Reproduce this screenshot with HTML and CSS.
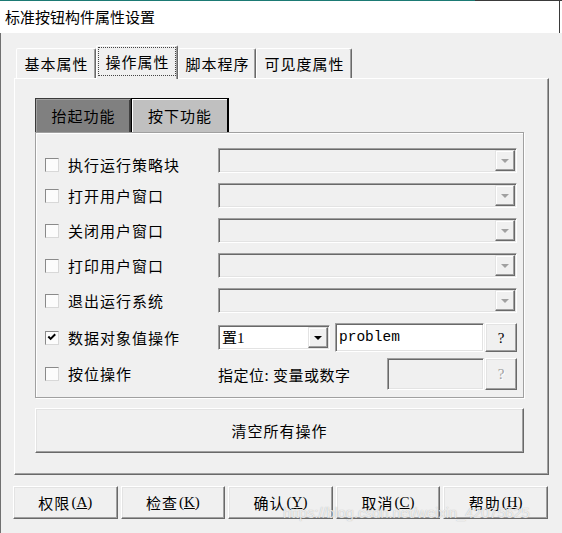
FILE: index.html
```html
<!DOCTYPE html>
<html lang="zh">
<head>
<meta charset="utf-8">
<title>标准按钮构件属性设置</title>
<link rel="stylesheet" href="styles.css">
</head>
<body>
<div class="titlebar">标准按钮构件属性设置</div>
<div class="client">
  <div class="tabs">
    <div class="tab t1">基本属性</div>
    <div class="tab t2 active"><span class="focus">操作属性</span></div>
    <div class="tab t3">脚本程序</div>
    <div class="tab t4">可见度属性</div>
  </div>
  <div class="panel">
    <div class="subtabs">
      <div class="subtab up">抬起功能</div>
      <div class="subtab down">按下功能</div>
    </div>
    <div class="group">
      <div class="row">
        <div class="lead first"><span class="check"></span><span class="label">执行运行策略块</span></div>
        <div class="combo"><span class="dd"><span class="arrow"></span></span></div>
      </div>
      <div class="row">
        <div class="lead"><span class="check"></span><span class="label">打开用户窗口</span></div>
        <div class="combo"><span class="dd"><span class="arrow"></span></span></div>
      </div>
      <div class="row">
        <div class="lead"><span class="check"></span><span class="label">关闭用户窗口</span></div>
        <div class="combo"><span class="dd"><span class="arrow"></span></span></div>
      </div>
      <div class="row">
        <div class="lead"><span class="check"></span><span class="label">打印用户窗口</span></div>
        <div class="combo"><span class="dd"><span class="arrow"></span></span></div>
      </div>
      <div class="row">
        <div class="lead"><span class="check"></span><span class="label">退出运行系统</span></div>
        <div class="combo"><span class="dd"><span class="arrow"></span></span></div>
      </div>
      <div class="row r6">
        <div class="lead"><span class="check"><svg width="13" height="13" viewBox="0 0 13 13"><polyline points="2.5,5.5 5,8 10,3" fill="none" stroke="#000" stroke-width="2.2"/></svg></span><span class="label">数据对象值操作</span></div>
        <div class="combo small"><span class="val">置<span class="num">1</span></span><span class="dd"><span class="arrow dark"></span></span></div>
        <div class="edit"><span class="mono">problem</span></div>
        <div class="qbtn">?</div>
      </div>
      <div class="row r7">
        <div class="lead"><span class="check"></span><span class="label">按位操作</span></div>
        <div class="hint">指定位: 变量或数字</div>
        <div class="edit disabled"></div>
        <div class="qbtn disabled">?</div>
      </div>
    </div>
    <div class="btn clear">清空所有操作</div>
  </div>
  <div class="buttons">
    <div class="btn bb">权限<span class="lat">(<u>A</u>)</span></div>
    <div class="btn bb">检查<span class="lat">(<u>K</u>)</span></div>
    <div class="btn bb">确认<span class="lat">(<u>Y</u>)</span></div>
    <div class="btn bb">取消<span class="lat">(<u>C</u>)</span></div>
    <div class="btn bb">帮助<span class="lat">(<u>H</u>)</span></div>
  </div>
</div>
<div class="watermark">https://blog.csdn.net/weixin_42075625</div>
</body>
</html>
```

FILE: styles.css
```css
html, body {
  margin: 0;
  padding: 0;
}
body {
  width: 562px;
  height: 533px;
  overflow: hidden;
  position: relative;
  background: #f0f0f0;
  font-family: "Noto Sans CJK SC", "Liberation Sans", sans-serif;
  font-size: 15px;
  color: #000;
}
.titlebar {
  height: 33px;
  line-height: 33px;
  padding-left: 5px;
  box-sizing: border-box;
  background:
    linear-gradient(to right, #1b7a74 0, #1b7a74 475px, #3a3a3a 475px) top left / 100% 1px no-repeat,
    linear-gradient(#3a3a3a, #3a3a3a) 559px 0 / 1px 100% no-repeat,
    #fff;
  font-size: 15px;
}
.client {
  height: 500px;
  box-shadow: inset 1px 0 #707070;
  padding-top: 12px;
  box-sizing: border-box;
}
.tabs {
  display: flex;
  align-items: flex-end;
  height: 33px;
  margin-left: 16px;
}
.tab {
  height: 30px;
  box-sizing: border-box;
  display: flex;
  align-items: center;
  justify-content: center;
  border: 1px solid;
  border-bottom: none;
  border-color: #fff #696969 transparent #fff;
  box-shadow: inset -1px 0 #a0a0a0;
  border-radius: 2px 2px 0 0;
  letter-spacing: 1px;
  padding: 0 0 1px 1px;
  background: #f0f0f0;
}
.t1 { width: 80px; }
.t2 { width: 82px; }
.t3 { width: 78px; }
.t4 { width: 96px; }
.tab.active {
  height: 34px;
  margin-bottom: -1px;
  position: relative;
  z-index: 1;
  align-items: flex-start;
  padding: 1px 0 0 0;
}
.focus {
  width: 78px;
  height: 29px;
  box-sizing: border-box;
  border: 1px dotted #444;
  display: flex;
  align-items: center;
  justify-content: center;
  padding: 0 0 1px 1px;
}
.panel {
  margin-left: 14px;
  width: 535px;
  height: 397px;
  box-sizing: border-box;
  border: 1px solid;
  border-color: #fff #696969 #696969 #fff;
  box-shadow: inset -1px -1px #a0a0a0;
  padding: 19px 0 0 20px;
}
.subtabs {
  display: flex;
  height: 34px;
}
.subtab {
  height: 34px;
  box-sizing: border-box;
  display: flex;
  align-items: center;
  justify-content: center;
  letter-spacing: 1px;
  padding-left: 1px;
}
.subtab.up {
  width: 96px;
  background: #808080;
  border: 1px solid #3a3a3a;
  border-bottom: none;
  box-shadow: inset 1px 1px #a0a0a0, inset -1px 0 #404040;
}
.subtab.down {
  width: 98px;
  background: #c0c0c0;
  border: 1px solid #000;
  border-right-width: 2px;
  border-bottom: none;
  box-shadow: inset 1px 1px #fff;
}
.group {
  width: 489px;
  height: 266px;
  box-sizing: border-box;
  border: 1px solid #a0a0a0;
  box-shadow: 1px 1px 0 #fff, inset 1px 1px 0 #fff;
  padding: 15px 0 0 9px;
  display: flex;
  flex-direction: column;
  gap: 10px;
}
.row {
  display: flex;
  align-items: center;
  height: 25px;
}
.row.r6 { height: 29px; }
.row.r7 { height: 32px; margin-top: -4px; }
.lead {
  display: flex;
  align-items: center;
  width: 173px;
}
.lead.first { margin-top: 9px; }
.check {
  width: 14px;
  height: 14px;
  box-sizing: border-box;
  border: 1px solid;
  border-color: #8a8a8a #d8d8d8 #d8d8d8 #8a8a8a;
  background: #fcfcfc;
  margin-right: 9px;
  display: flex;
  align-items: center;
  justify-content: center;
}
.check svg { display: block; }
.label {
  letter-spacing: 1px;
  line-height: 20px;
}
.combo {
  width: 299px;
  height: 25px;
  box-sizing: border-box;
  border: 1px solid;
  border-color: #a0a0a0 #fff #fff #a0a0a0;
  box-shadow: inset 1px 1px #696969, inset -1px -1px #e3e3e3;
  background: #f0f0f0;
  display: flex;
  align-items: center;
  justify-content: flex-end;
  padding-right: 1px;
}
.combo.small {
  width: 112px;
  background: #fff;
  justify-content: space-between;
  padding-left: 3px;
}
.val {
  font-size: 15px;
  line-height: 20px;
}
.num {
  font-family: "Liberation Serif", serif;
}
.dd {
  width: 20px;
  height: 21px;
  box-sizing: border-box;
  border: 1px solid;
  border-color: #e3e3e3 #696969 #696969 #e3e3e3;
  box-shadow: inset -1px -1px #a0a0a0, inset 1px 1px #fff;
  background: #f0f0f0;
  display: flex;
  align-items: center;
  justify-content: center;
}
.arrow {
  width: 0;
  height: 0;
  border-left: 4px solid transparent;
  border-right: 4px solid transparent;
  border-top: 4px solid #a0a0a0;
  margin-top: 1px;
}
.arrow.dark { border-top-color: #000; }
.edit {
  width: 149px;
  height: 29px;
  box-sizing: border-box;
  margin-left: 5px;
  border: 1px solid;
  border-color: #a0a0a0 #fff #fff #a0a0a0;
  box-shadow: inset 1px 1px #696969, inset -1px -1px #e3e3e3;
  background: #fff;
  display: flex;
  align-items: center;
  padding: 0 0 2px 3px;
}
.mono {
  font-family: "Liberation Mono", monospace;
  font-size: 14.5px;
}
.hint {
  width: 169px;
  letter-spacing: 0.5px;
}
.edit.disabled {
  width: 97px;
  height: 32px;
  margin-left: 0;
  background: #f0f0f0;
}
.qbtn {
  width: 32px;
  height: 29px;
  box-sizing: border-box;
  margin-left: 1px;
  border: 1px solid;
  border-color: #fff #696969 #696969 #fff;
  box-shadow: inset -1px -1px #a0a0a0, inset 1px 1px #e3e3e3;
  display: flex;
  align-items: center;
  justify-content: center;
  font-family: "Liberation Serif", serif;
  font-size: 15px;
  padding-top: 1px;
}
.qbtn.disabled {
  height: 32px;
  color: #a0a0a0;
  text-shadow: 1px 1px #fff;
}
.btn {
  box-sizing: border-box;
  border: 1px solid;
  border-color: #fff #696969 #696969 #fff;
  box-shadow: inset -1px -1px #a0a0a0, inset 1px 1px #e3e3e3;
  display: flex;
  align-items: center;
  justify-content: center;
  letter-spacing: 1px;
}
.btn.clear {
  margin-top: 10px;
  width: 489px;
  height: 45px;
}
.buttons {
  display: flex;
  gap: 3px;
  margin: 11px 0 0 13px;
  width: 535px;
}
.btn.bb {
  flex: 1;
  height: 33px;
}
.lat {
  font-family: "Liberation Serif", serif;
  font-size: 15px;
  letter-spacing: 0;
  margin-left: 1px;
}
.watermark {
  position: absolute;
  left: 283px;
  top: 505px;
  font-family: "Liberation Sans", sans-serif;
  font-size: 14.5px;
  color: rgba(255, 255, 255, 0.75);
  text-shadow: 0 0 1px rgba(120, 120, 120, 0.6);
  white-space: nowrap;
}
```
